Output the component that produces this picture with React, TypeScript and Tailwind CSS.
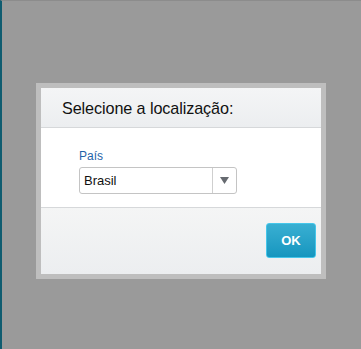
export default function App() {
  return (
    <main
      className="w-[361px] h-[349px] bg-[#9a9a9a] border-l-[2px] border-l-[#0f5c70] border-t border-t-[#8c8c8c] pt-[82px] pl-[34px] overflow-hidden"
      style={{ fontFamily: '"Liberation Sans", Arial, sans-serif' }}
    >
      <div className="w-[290px] bg-[#bebebe] p-[5px]">
        <div className="w-[280px] bg-white flex flex-col">
          <div className="h-[40px] border-b border-[#d6d8da] bg-gradient-to-b from-[#f4f5f6] to-[#eceef0] pl-[21px] flex items-center">
            <h1 className="text-[16.2px] tracking-[-0.1px] text-[#111] leading-none pt-[2px]">Selecione a localização:</h1>
          </div>
          <div className="h-[79px] pl-[38px] pt-[21px]">
            <p className="text-[12px] text-[#1f63a8] leading-[14px]">País</p>
            <div className="mt-[4px] w-[158px] h-[27px] border border-[#c4c4c4] rounded-[3px] flex items-center">
              <span className="flex-1 pl-[4px] text-[13px] text-[#111]">Brasil</span>
              <div className="w-[24px] h-full border-l border-[#cfcfcf] flex items-center justify-center">
                <svg width="9" height="7" viewBox="0 0 9 7">
                  <path d="M0 0H9L4.5 7Z" fill="#666a70" />
                </svg>
              </div>
            </div>
          </div>
          <div className="h-[67px] border-t border-[#d6d8da] bg-gradient-to-b from-[#f4f5f5] to-[#eceef0] flex justify-end items-start pt-[15px] pr-[5px]">
            <button className="w-[50px] h-[35px] rounded-[3px] border border-[#45c6ea] bg-gradient-to-b from-[#38afd2] to-[#1496bf] text-white text-[13px] font-bold">
              OK
            </button>
          </div>
        </div>
      </div>
    </main>
  );
}
